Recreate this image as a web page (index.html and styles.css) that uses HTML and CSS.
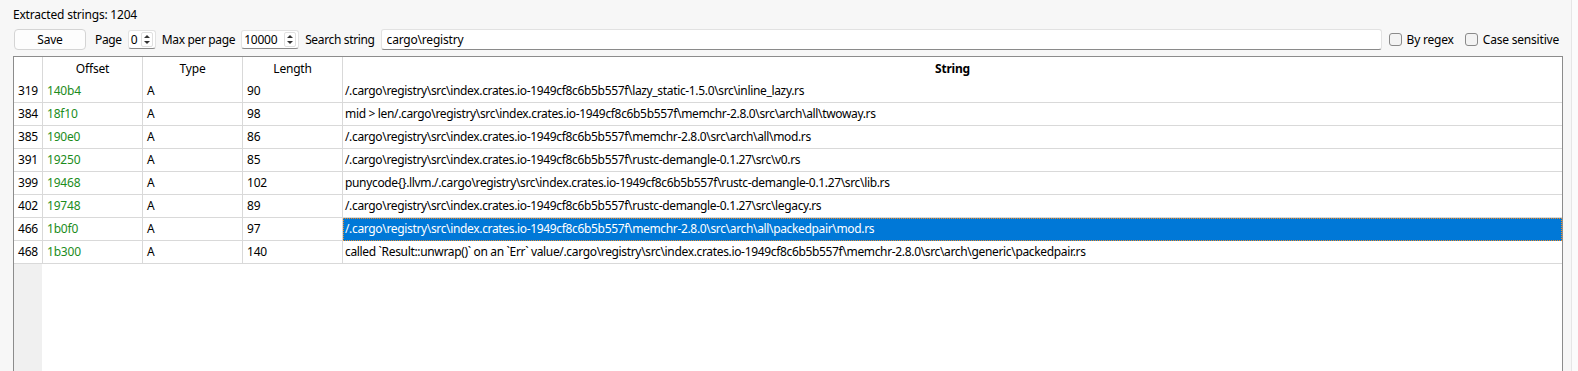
FILE: index.html
```html
<!DOCTYPE html>
<html lang="en">
<head>
    <meta charset="UTF-8">
    <meta name="viewport" content="width=device-width, initial-scale=1.0">
    <title>Extracted strings</title>
    <link rel="stylesheet" href="styles.css">
</head>
<body>
    <div class="window">
        <div class="caption">Extracted strings: 1204</div>
        <div class="toolbar">
            <button class="btn">Save</button>
            <span class="label">Page</span>
            <div class="spin spin-page">
                <span class="spin-value">0</span>
                <span class="spin-arrows"><span class="up"></span><span class="down"></span></span>
            </div>
            <span class="label">Max per page</span>
            <div class="spin spin-max">
                <span class="spin-value">10000</span>
                <span class="spin-arrows"><span class="up"></span><span class="down"></span></span>
            </div>
            <span class="label">Search string</span>
            <input type="text" class="search" value="cargo\registry">
            <label class="check"><span class="box"></span>By regex</label>
            <label class="check"><span class="box"></span>Case sensitive</label>
        </div>
        <div class="grid">
            <div class="row head">
                <div class="cell num"></div>
                <div class="cell center">Offset</div>
                <div class="cell center">Type</div>
                <div class="cell center">Length</div>
                <div class="cell center bold">String</div>
            </div>
            <div class="row">
                <div class="cell num">319</div>
                <div class="cell offset">140b4</div>
                <div class="cell">A</div>
                <div class="cell">90</div>
                <div class="cell text">/.cargo\registry\src\index.crates.io-1949cf8c6b5b557f\lazy_static-1.5.0\src\inline_lazy.rs</div>
            </div>
            <div class="row">
                <div class="cell num">384</div>
                <div class="cell offset">18f10</div>
                <div class="cell">A</div>
                <div class="cell">98</div>
                <div class="cell text">mid &gt; len/.cargo\registry\src\index.crates.io-1949cf8c6b5b557f\memchr-2.8.0\src\arch\all\twoway.rs</div>
            </div>
            <div class="row">
                <div class="cell num">385</div>
                <div class="cell offset">190e0</div>
                <div class="cell">A</div>
                <div class="cell">86</div>
                <div class="cell text">/.cargo\registry\src\index.crates.io-1949cf8c6b5b557f\memchr-2.8.0\src\arch\all\mod.rs</div>
            </div>
            <div class="row">
                <div class="cell num">391</div>
                <div class="cell offset">19250</div>
                <div class="cell">A</div>
                <div class="cell">85</div>
                <div class="cell text">/.cargo\registry\src\index.crates.io-1949cf8c6b5b557f\rustc-demangle-0.1.27\src\v0.rs</div>
            </div>
            <div class="row">
                <div class="cell num">399</div>
                <div class="cell offset">19468</div>
                <div class="cell">A</div>
                <div class="cell">102</div>
                <div class="cell text">punycode{}.llvm./.cargo\registry\src\index.crates.io-1949cf8c6b5b557f\rustc-demangle-0.1.27\src\lib.rs</div>
            </div>
            <div class="row">
                <div class="cell num">402</div>
                <div class="cell offset">19748</div>
                <div class="cell">A</div>
                <div class="cell">89</div>
                <div class="cell text">/.cargo\registry\src\index.crates.io-1949cf8c6b5b557f\rustc-demangle-0.1.27\src\legacy.rs</div>
            </div>
            <div class="row">
                <div class="cell num">466</div>
                <div class="cell offset">1b0f0</div>
                <div class="cell">A</div>
                <div class="cell">97</div>
                <div class="cell text selected">/.cargo\registry\src\index.crates.io-1949cf8c6b5b557f\memchr-2.8.0\src\arch\all\packedpair\mod.rs</div>
            </div>
            <div class="row">
                <div class="cell num">468</div>
                <div class="cell offset">1b300</div>
                <div class="cell">A</div>
                <div class="cell">140</div>
                <div class="cell text">called `Result::unwrap()` on an `Err` value/.cargo\registry\src\index.crates.io-1949cf8c6b5b557f\memchr-2.8.0\src\arch\generic\packedpair.rs</div>
            </div>
        </div>
    </div>
</body>
</html>
```

FILE: styles.css
```css
html, body {
    margin: 0;
    height: 100%;
    overflow: hidden;
}
body {
    font-family: "Noto Sans", "Open Sans", sans-serif;
    font-size: 12px;
    letter-spacing: -0.2px;
    color: #000;
    background-color: #fbfbfb;
}
.window {
    width: 1572px;
    height: 100%;
    box-sizing: border-box;
    background-color: #f7f7f7;
    border-right: 1px solid #e6e6e6;
    padding: 7px 0 0 13px;
    display: flex;
    flex-direction: column;
}
.caption {
    line-height: 16px;
    height: 16px;
}
.toolbar {
    display: flex;
    align-items: center;
    height: 21px;
    margin-top: 6px;
    margin-left: 1px;
    width: 1545px;
}
.btn {
    width: 72px;
    height: 21px;
    border: 1px solid #d4d4d4;
    border-radius: 4px;
    background-color: #fdfdfd;
    font-family: inherit;
    font-size: 12px;
    letter-spacing: inherit;
    padding: 0;
    margin-right: 9px;
}
.label {
    margin-right: 6px;
    letter-spacing: -0.35px;
    white-space: nowrap;
}
.spin {
    height: 19px;
    box-sizing: border-box;
    border: 1px solid #e2e2e2;
    border-bottom-color: #8a8a8a;
    border-radius: 3px;
    background-color: #fff;
    display: flex;
    align-items: center;
    margin-right: 6px;
}
.spin-page {
    width: 28px;
}
.spin-max {
    width: 58px;
}
.spin-value {
    flex: 1;
    padding-left: 2px;
}
.spin-arrows {
    width: 12px;
    height: 15px;
    margin-right: 2px;
    border: 1px solid #e0e0e0;
    border-radius: 2px;
    box-sizing: border-box;
    display: flex;
    flex-direction: column;
    align-items: center;
    justify-content: space-around;
}
.up, .down {
    width: 0;
    height: 0;
    border-left: 3px solid transparent;
    border-right: 3px solid transparent;
}
.up {
    border-bottom: 3px solid #333;
}
.down {
    border-top: 3px solid #333;
}
.search {
    flex: 1;
    height: 21px;
    box-sizing: border-box;
    border: 1px solid #e2e2e2;
    border-bottom-color: #8a8a8a;
    border-radius: 3px;
    background-color: #fff;
    font-family: inherit;
    font-size: 12px;
    letter-spacing: inherit;
    padding: 0 5px;
    margin-right: 7px;
}
.check {
    display: flex;
    align-items: center;
    white-space: nowrap;
    margin-right: 11px;
}
.check:last-child {
    margin-right: 0;
}
.box {
    width: 13px;
    height: 13px;
    box-sizing: border-box;
    border: 1px solid #8a8a8a;
    border-radius: 3px;
    background-color: #f3f3f3;
    margin-right: 5px;
}
.grid {
    flex: 1;
    margin-top: 6px;
    width: 1550px;
    box-sizing: border-box;
    border: 1px solid #8c8c8c;
    border-bottom: none;
    background: linear-gradient(to right, #f0f0f0 28px, #fff 28px);
}
.row {
    display: grid;
    grid-template-columns: 29px 100px 100px 100px 1fr;
    height: 23px;
    background-color: #fff;
}
.cell {
    box-sizing: border-box;
    border-right: 1px solid #d9d9d9;
    border-bottom: 1px solid #d9d9d9;
    padding: 0 4px;
    line-height: 22px;
    white-space: nowrap;
    overflow: hidden;
}
.cell:last-child {
    border-right: none;
}
.text {
    padding-left: 2px;
    letter-spacing: -0.34px;
}
.head .cell {
    border-bottom: none;
    line-height: 23px;
}
.center {
    text-align: center;
}
.bold {
    font-weight: bold;
}
.offset {
    color: #1c8c1c;
}
.selected {
    background-color: #0078d7;
    color: #fff;
    border-bottom-color: #0078d7;
    outline: 1px dotted #f08a24;
    outline-offset: -1px;
}
```
